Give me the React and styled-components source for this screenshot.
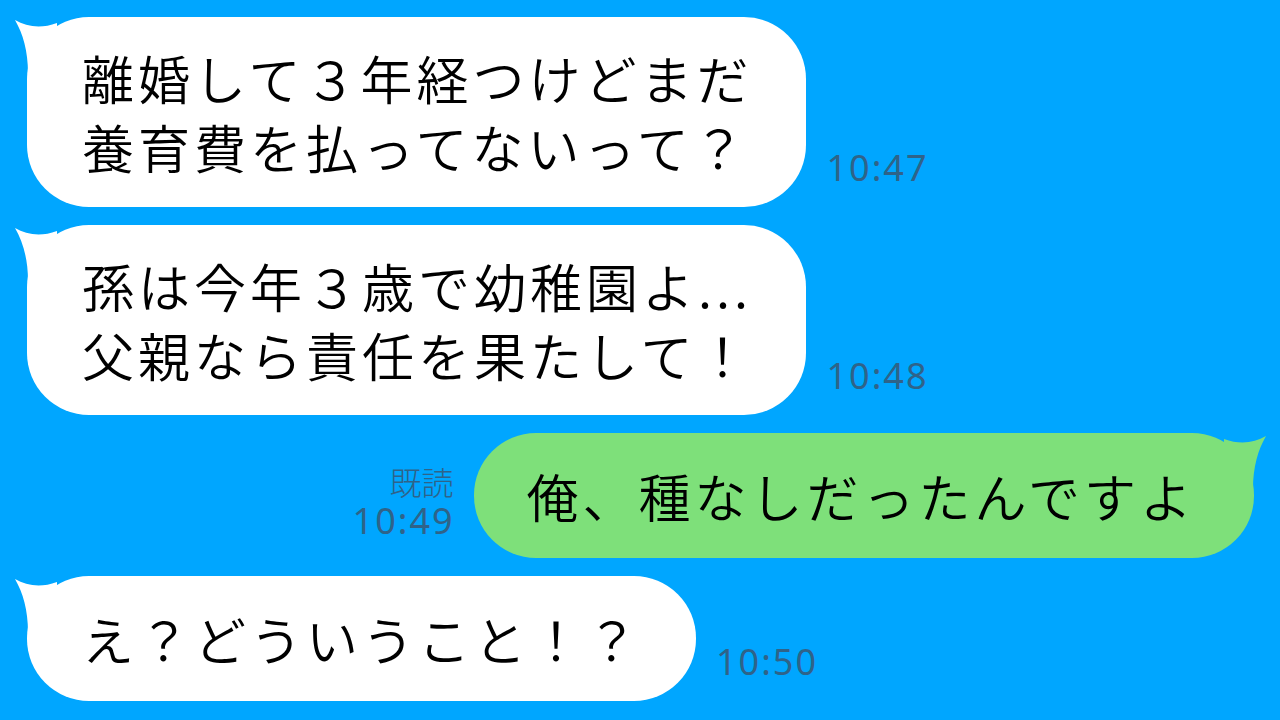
import React from "react";
import styled, { createGlobalStyle } from "styled-components";

const GlobalStyle = createGlobalStyle`
  html, body {
    margin: 0;
    padding: 0;
    background: #00a6ff;
  }
  body {
    font-family: "Noto Sans CJK JP", "Noto Sans", sans-serif;
  }
`;

const messages = [
  { id: 1, side: "left", lines: ["離婚して３年経つけどまだ", "養育費を払ってないって？"], time: "10:47" },
  { id: 2, side: "left", lines: ["孫は今年３歳で幼稚園よ...", "父親なら責任を果たして！"], time: "10:48" },
  { id: 3, side: "right", lines: ["俺、種なしだったんですよ"], time: "10:49", read: true },
  { id: 4, side: "left", lines: ["え？どういうこと！？"], time: "10:50" },
];

function Tail({ side }) {
  const color = side === "right" ? "#7ee07a" : "#ffffff";
  return (
    <TailSvg side={side} viewBox="0 0 50 60" width="50" height="60">
      <path
        d="M0 3 C12 10 26 12 42 6 L42 56 L13 56 C13 34 8 17 0 3 Z"
        fill={color}
      />
    </TailSvg>
  );
}

function Message({ msg }) {
  const right = msg.side === "right";
  const single = msg.lines.length === 1;
  return (
    <Row side={msg.side}>
      {right && (
        <Meta side={msg.side}>
          {msg.read && <Read>既読</Read>}
          <Time>{msg.time}</Time>
        </Meta>
      )}
      <Bubble side={msg.side} single={single}>
        <Tail side={msg.side} />
        <Text>
          {msg.lines.map((l, i) => (
            <Line key={i}>{l}</Line>
          ))}
        </Text>
      </Bubble>
      {!right && (
        <Meta side={msg.side}>
          <Time>{msg.time}</Time>
        </Meta>
      )}
    </Row>
  );
}

export default function App() {
  return (
    <>
      <GlobalStyle />
      <Chat>
        {messages.map((m) => (
          <Message key={m.id} msg={m} />
        ))}
      </Chat>
    </>
  );
}

const Chat = styled.div`
  width: 1280px;
  height: 720px;
  box-sizing: border-box;
  padding: 17px 26px 0 27px;
  display: flex;
  flex-direction: column;
  gap: 18px;
  overflow: hidden;
`;

const Row = styled.div`
  display: flex;
  align-items: flex-end;
  justify-content: ${(p) => (p.side === "right" ? "flex-end" : "flex-start")};
  gap: ${(p) => (p.side === "right" ? "21px" : "20px")};
`;

const Bubble = styled.div`
  position: relative;
  background: ${(p) => (p.side === "right" ? "#7ee07a" : "#ffffff")};
  border-radius: 62px;
  padding: ${(p) => (p.single ? "28px" : "26px")}
    ${(p) => (p.side === "right" ? "58px" : "54px")}
    ${(p) => (p.single ? "28px" : "26px")}
    ${(p) => (p.side === "right" ? "53px" : "55px")};
`;

const TailSvg = styled.svg`
  position: absolute;
  top: 0;
  ${(p) =>
    p.side === "right"
      ? "right: -12px; transform: scaleX(-1);"
      : "left: -12px;"}
`;

const Text = styled.div`
  position: relative;
  font-size: 52px;
  font-weight: 350;
  letter-spacing: 4px;
  line-height: 69px;
  color: #000;
  white-space: nowrap;
`;

const Line = styled.div``;

const Meta = styled.div`
  display: flex;
  flex-direction: column;
  align-items: flex-end;
  margin-bottom: ${(p) => (p.side === "right" ? "18px" : "20px")};
  color: #2f6389;
`;

const Read = styled.div`
  font-family: "Noto Sans CJK JP", sans-serif;
  font-size: 32px;
  font-weight: 300;
  line-height: 42px;
  margin-right: -1px;
`;

const Time = styled.div`
  font-family: "Noto Sans", "Open Sans", sans-serif;
  font-size: 36px;
  letter-spacing: 2px;
  line-height: 38px;
  margin-right: -2px;
`;
